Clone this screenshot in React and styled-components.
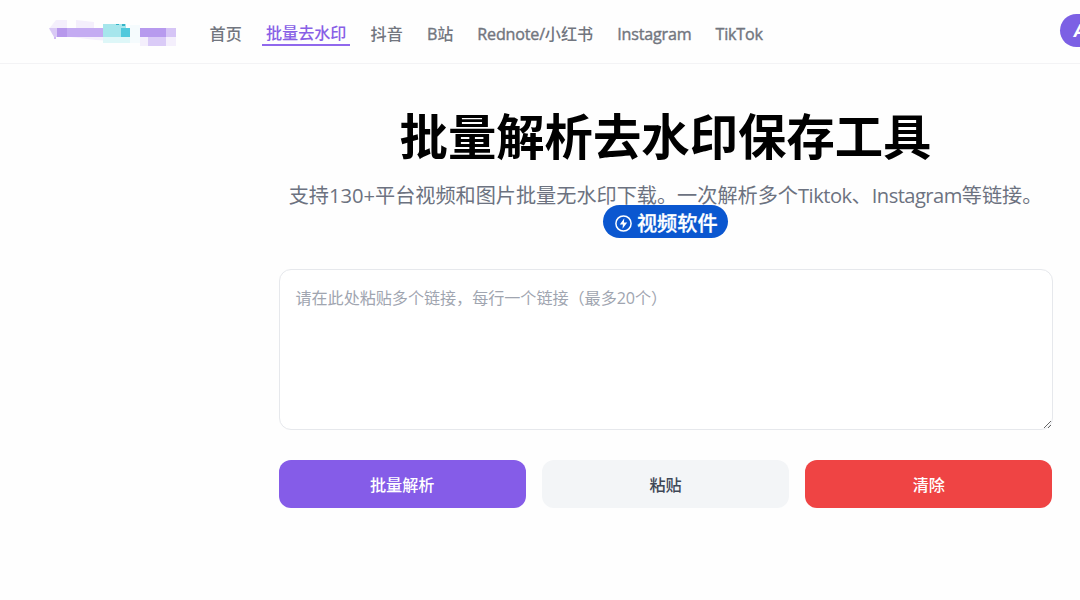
import React from 'react'
import styled, { createGlobalStyle, css } from 'styled-components'

const GlobalStyle = createGlobalStyle`
  *,
  *::before,
  *::after {
    box-sizing: border-box;
  }

  body {
    margin: 0;
    overflow: hidden;
    background: #fefefe;
    font-family: 'Open Sans', 'Noto Sans CJK SC', sans-serif;
    font-size: 16.12px;
  }
`

const Page = styled.div`
  width: 1331px;
  height: 600px;
`

const Header = styled.header`
  display: flex;
  align-items: flex-start;
  height: 64px;
  padding: 14px 0 0 48px;
  border-bottom: 1px solid #f3f3f5;
`

const Logo = styled.svg`
  flex: none;
  width: 130px;
  height: 36px;
`

const Nav = styled.nav`
  display: flex;
  flex: none;
  gap: 16.1px;
  width: 882px;
  padding: 7px 0 0 27.6px;
`

const NavLink = styled.a`
  height: 25px;
  padding: 0 4px;
  border-bottom: 2px solid transparent;
  color: #72767f;
  font-weight: 500;
  line-height: 26px;
  white-space: nowrap;

  ${({ $active }) =>
    $active &&
    css`
      border-color: #9068ed;
      color: #8860e6;
      line-height: 24px;
    `};
`

const Latin = styled.span`
  letter-spacing: ${({ $spacing }) => $spacing || '-0.2px'};
  ${({ $medium }) =>
    $medium &&
    css`
      -webkit-text-stroke: 0.4px currentColor;
    `};
`

const UserButton = styled.button`
  flex: none;
  width: 120px;
  height: 33px;
  padding: 0 0 0 14px;
  border: 0;
  border-radius: 17px;
  background: #7c60e4;
  color: #fff;
  font: italic 700 18px/33px 'Noto Sans', sans-serif;
  text-align: left;
`

const Main = styled.main`
  width: 774px;
  margin: 0 auto;
  padding-top: 42px;
`

const Title = styled.h1`
  margin: 0;
  color: #000;
  font-size: 48.36px;
  font-weight: 700;
  line-height: 60px;
  text-align: center;
`

const Subtitle = styled.div`
  display: flex;
  flex-direction: column;
  align-items: center;
  height: 73px;
  margin: 15px 0 15px;
  color: #6c7280;
  font-size: 20.15px;
  line-height: 28px;
  white-space: nowrap;
`

const Text = styled.p`
  margin: 0;
`

const Badge = styled.a`
  display: flex;
  align-items: center;
  gap: 3.5px;
  height: 33px;
  margin-top: -4px;
  padding: 3px 10px 0 11px;
  border-radius: 17px;
  background: #0b57d0;
  color: #fff;
  font-weight: 500;
  -webkit-text-stroke: 0.3px currentColor;
`

const LinksInput = styled.textarea`
  display: block;
  width: 100%;
  height: 161px;
  padding: 16px;
  border: 1px solid #e6e8ec;
  border-radius: 12px;
  outline: 0;
  background: #fff;
  font: inherit;
  letter-spacing: -0.05px;
  line-height: 24px;
  resize: vertical;

  &::placeholder {
    color: #a0a5b0;
  }
`

const Actions = styled.div`
  display: grid;
  grid-template-columns: repeat(3, 1fr);
  gap: 16px;
  margin-top: 30px;
`

const Button = styled.button`
  height: 48px;
  padding: 0;
  border: 0;
  border-radius: 12px;
  background: ${({ $background }) => $background};
  color: ${({ $color }) => $color || '#fff'};
  font: inherit;
  font-weight: 500;
`

const links = [
  { latin: '', label: '首页' },
  { latin: '', label: '批量去水印', active: true },
  { latin: '', label: '抖音' },
  { latin: 'B', label: '站' },
  { latin: 'Rednote/', label: '小红书' },
  { latin: 'Instagram', label: '' },
  { latin: 'TikTok', label: '' },
]

const LogoMark = () => (
  <Logo viewBox="0 0 130 36">
    <path d="M1 15 L8 6 H19 V14 H28 V6 L46 8 V14 H128 V32 H92 V27 L81 28 L48 26 L5 21Z" fill="#f4effc" />
    <path d="M1 14h8v9H6Z" fill="#d9c9f5" />
    <path d="M6 23h2v2H6z" fill="#d0b9f4" />
    <path d="M9 14h10v9H9z" fill="#b798ec" />
    <path d="M19 14h36v9H19z" fill="#c4abf2" />
    <path d="M55 10h23v13H55z" fill="#a6e6ec" />
    <path d="M73 14h9v9h-9z" fill="#50c9dc" />
    <path d="M55 23h27v6H55z" fill="#def7f8" />
    <path d="M74 10h3v2h-3zM68 10h3v1h-3z" fill="#36b4c7" />
    <path d="M82 11h10v18H82z" fill="#f5fbfd" />
    <path d="M92 14h26v9H92z" fill="#b79aee" />
    <path d="M118 14h10v9h-10z" fill="#d6c5f6" />
    <path d="M100 23h18v9h-18z" fill="#dacbf7" />
  </Logo>
)

const BoltIcon = () => (
  <svg width="19" height="19" viewBox="0 0 19 19">
    <circle cx="9.5" cy="9.5" r="7.6" fill="none" stroke="#fff" strokeWidth="1.5" />
    <path d="M10.3 4.3 5.8 10.4h3.1L8.5 14.7l4.7-6.3h-3.3Z" fill="#fff" />
  </svg>
)

const App = () => (
  <Page>
    <GlobalStyle />
    <Header>
      <LogoMark />
      <Nav>
        {links.map(({ latin, label, active }) => (
          <NavLink key={latin + label} $active={active}>
            {latin && <Latin $medium>{latin}</Latin>}
            {label}
          </NavLink>
        ))}
      </Nav>
      <UserButton>A</UserButton>
    </Header>
    <Main>
      <Title>批量解析去水印保存工具</Title>
      <Subtitle>
        <Text>
          支持130+平台视频和图片批量无水印下载。一次解析多个
          <Latin $spacing="-0.5px">Tiktok</Latin>、
          <Latin $spacing="-0.55px">Instagram</Latin>等链接。
        </Text>
        <Badge>
          <BoltIcon />
          视频软件
        </Badge>
      </Subtitle>
      <LinksInput placeholder="请在此处粘贴多个链接，每行一个链接（最多20个）" />
      <Actions>
        <Button $background="#855ce8">批量解析</Button>
        <Button $background="#f3f5f7" $color="#3e4756">
          粘贴
        </Button>
        <Button $background="#ef4444">清除</Button>
      </Actions>
    </Main>
  </Page>
)

export default App
